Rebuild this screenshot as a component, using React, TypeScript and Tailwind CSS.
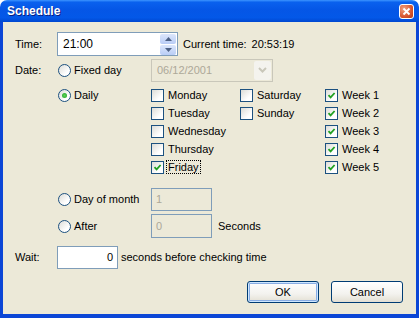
import React from 'react';

const Radio: React.FC<{ checked?: boolean }> = ({ checked }) => (
  <span className="inline-flex h-[13px] w-[13px] shrink-0 items-center justify-center rounded-full border border-[#1C5180] bg-[linear-gradient(135deg,#DCDCD7,#FFFFFF_70%)]">
    {checked && <span className="h-[5px] w-[5px] rounded-full bg-[radial-gradient(circle,#5BD35B,#21A121)]" />}
  </span>
);

const Check: React.FC<{ checked?: boolean }> = ({ checked }) => (
  <span className="inline-flex h-[13px] w-[13px] shrink-0 items-center justify-center border border-[#1C5180] bg-[linear-gradient(135deg,#DCDCD7,#FFFFFF_70%)]">
    {checked && (
      <svg width="9" height="9" viewBox="0 0 9 9">
        <path d="M1.5 4.2 L3.6 6.4 L7.6 2" stroke="#21A121" strokeWidth="1.8" fill="none" />
      </svg>
    )}
  </span>
);

const CheckItem: React.FC<{ label: string; checked?: boolean; focus?: boolean }> = ({ label, checked, focus }) => (
  <div className="flex h-[18px] items-center">
    <Check checked={checked} />
    <span className={focus ? 'ml-[2px] border border-dotted border-black px-[1px] leading-[12px]' : 'ml-[4px]'}>{label}</span>
  </div>
);

const Button: React.FC<{ label: string; primary?: boolean }> = ({ label, primary }) => (
  <button
    className={
      'h-[22px] w-[72px] rounded-[3px] border border-[#003C74] bg-[linear-gradient(to_bottom,#FFFFFF,#F3F2EE_60%,#E3DFD3)] text-black ' +
      (primary ? 'shadow-[inset_0_0_0_1px_#CEE7FF,inset_0_0_0_2px_#89ADE4]' : '')
    }
  >
    {label}
  </button>
);

export default function App() {
  return (
    <div className="flex h-[318px] w-[419px] flex-col font-['Liberation_Sans',Arial,sans-serif] text-[11px] text-black">
      {/* title bar */}
      <div className="flex h-[22px] shrink-0 items-center justify-between rounded-t-[7px] bg-[linear-gradient(to_bottom,#3D95FF_0%,#0A61EE_10%,#0556E6_45%,#0358E8_80%,#0047D0_100%)] pl-[7px] pr-[5px]">
        <span className="text-[12px] font-bold text-white [text-shadow:1px_1px_0_#0A1E80]">Schedule</span>
        <span className="flex h-[15px] w-[15px] items-center justify-center rounded-[3px] border border-white bg-[radial-gradient(circle_at_30%_30%,#F0A080,#D8562F_60%,#B33A18)]">
          <svg width="9" height="9" viewBox="0 0 9 9">
            <path d="M1.5 1.5 L7.5 7.5 M7.5 1.5 L1.5 7.5" stroke="white" strokeWidth="1.8" />
          </svg>
        </span>
      </div>

      {/* client area */}
      <div className="flex flex-1 flex-col border-x-[3px] border-b-[4px] border-[#0B46D6] bg-[#ECE9D8] pl-[12px]">
        {/* Time */}
        <div className="mt-[10px] flex h-[24px] items-center">
          <span className="w-[42px]">Time:</span>
          <div className="flex h-[24px] w-[121px] items-center border border-[#7F9DB9] bg-white">
            <span className="flex-1 pl-[5px] text-[12px]">21:00</span>
            <div className="mr-[1px] flex flex-col gap-[1px]">
              <span className="flex h-[10px] w-[16px] items-center justify-center rounded-[2px] bg-[linear-gradient(to_bottom,#DCE6FB,#B9CDF6)]">
                <svg width="7" height="4" viewBox="0 0 7 4"><path d="M0 4 L3.5 0 L7 4 Z" fill="#4D6185" /></svg>
              </span>
              <span className="flex h-[10px] w-[16px] items-center justify-center rounded-[2px] bg-[linear-gradient(to_bottom,#DCE6FB,#B9CDF6)]">
                <svg width="7" height="4" viewBox="0 0 7 4"><path d="M0 0 L3.5 4 L7 0 Z" fill="#4D6185" /></svg>
              </span>
            </div>
          </div>
          <span className="ml-[5px] whitespace-nowrap">Current time:</span>
          <span className="ml-[5px] whitespace-nowrap">20:53:19</span>
        </div>

        {/* Date / Fixed day */}
        <div className="mt-[2px] flex h-[24px] items-center">
          <span className="w-[43px]">Date:</span>
          <div className="flex w-[93px] items-center">
            <Radio />
            <span className="ml-[3px]">Fixed day</span>
          </div>
          <div className="flex h-[23px] w-[122px] items-center border border-[#C9C7BA] bg-[#ECE9D8]">
            <span className="flex-1 pl-[5px] text-[#ACA899]">06/12/2001</span>
            <span className="mr-[1px] flex h-[19px] w-[17px] items-center justify-center rounded-[2px] bg-[#F4F3EE]">
              <svg width="9" height="6" viewBox="0 0 9 6"><path d="M1 1 L4.5 4.5 L8 1" stroke="#C9C7BA" strokeWidth="2" fill="none" /></svg>
            </span>
          </div>
        </div>

        {/* Daily */}
        <div className="mt-[4px] flex">
          <div className="w-[43px]" />
          <div className="flex h-[18px] w-[93px] items-center">
            <Radio checked />
            <span className="ml-[3px]">Daily</span>
          </div>
          <div className="flex w-[89px] flex-col">
            <CheckItem label="Monday" />
            <CheckItem label="Tuesday" />
            <CheckItem label="Wednesday" />
            <CheckItem label="Thursday" />
            <CheckItem label="Friday" checked focus />
          </div>
          <div className="flex w-[85px] flex-col">
            <CheckItem label="Saturday" />
            <CheckItem label="Sunday" />
          </div>
          <div className="flex flex-col">
            <CheckItem label="Week 1" checked />
            <CheckItem label="Week 2" checked />
            <CheckItem label="Week 3" checked />
            <CheckItem label="Week 4" checked />
            <CheckItem label="Week 5" checked />
          </div>
        </div>

        {/* Day of month */}
        <div className="mt-[12px] flex h-[23px] items-center">
          <div className="w-[43px]" />
          <div className="flex w-[93px] items-center">
            <Radio />
            <span className="ml-[3px]">Day of month</span>
          </div>
          <div className="flex h-[23px] w-[61px] items-center border border-[#7F9DB9] pl-[4px] text-[#ACA899]">1</div>
        </div>

        {/* After */}
        <div className="mt-[3px] flex h-[24px] items-center">
          <div className="w-[43px]" />
          <div className="flex w-[93px] items-center">
            <Radio />
            <span className="ml-[3px]">After</span>
          </div>
          <div className="flex h-[24px] w-[61px] items-center border border-[#7F9DB9] pl-[4px] text-[#ACA899]">0</div>
          <span className="ml-[6px]">Seconds</span>
        </div>

        {/* Wait */}
        <div className="mt-[8px] flex h-[23px] items-center">
          <span className="w-[42px]">Wait:</span>
          <div className="flex h-[23px] w-[61px] items-center justify-end border border-[#7F9DB9] bg-white pr-[4px]">0</div>
          <span className="ml-[3px]">seconds before checking time</span>
        </div>

        {/* Buttons */}
        <div className="mt-[12px] flex justify-end gap-[12px] pr-[13px]">
          <Button label="OK" primary />
          <Button label="Cancel" />
        </div>
      </div>
    </div>
  );
}
